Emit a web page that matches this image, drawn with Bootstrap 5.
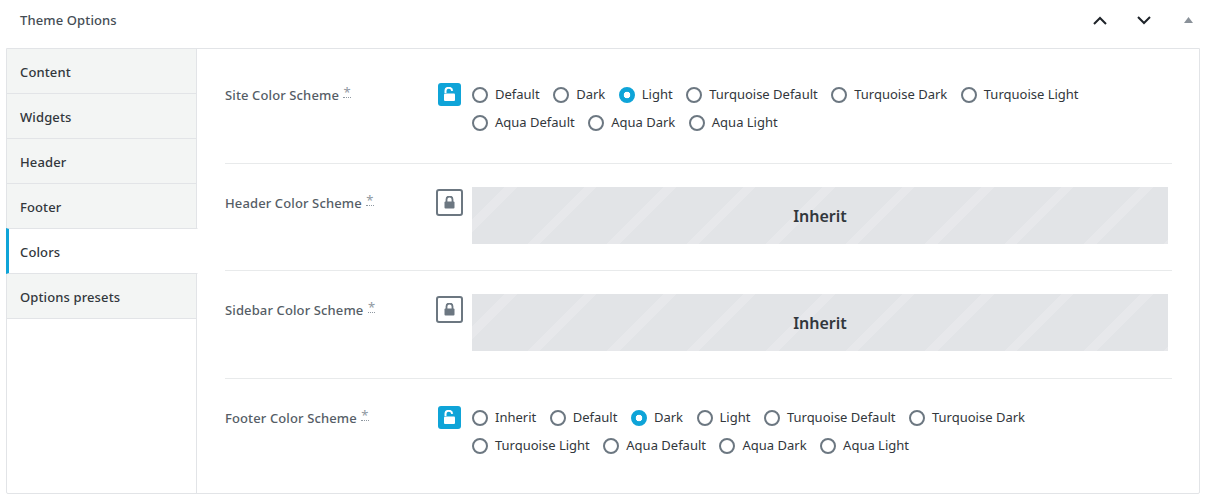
<!DOCTYPE html>
<html lang="en">
<head>
<meta charset="utf-8">
<title>Theme Options</title>
<link href="https://cdn.jsdelivr.net/npm/bootstrap@5.3.0/dist/css/bootstrap.min.css" rel="stylesheet">
<style>
body{font-family:"Noto Sans","Open Sans",sans-serif;font-size:13px;color:#32373c;background:#fff;margin:0;overflow:hidden}
.wrap-box{height:500px}
.top-bar{height:48px;padding-left:20px;padding-bottom:8px}
.top-title{font-size:13px;font-weight:500;letter-spacing:.12px;color:#444c54;line-height:40px}
.arrow-btn{width:44px;height:40px}
.tri-btn{width:44px;height:40px;margin-right:-3px}
.panel-box{margin:0 7px 0 6px;height:446px;border:1px solid #e2e4e7;border-radius:0 0 2px 2px}
.side-tabs{width:190px;flex:none;margin-top:-1px}
.side-tab{line-height:46px;padding-left:13px;background:#f3f5f4;color:#32373c;font-weight:500;letter-spacing:.12px;border-bottom:1px solid #e2e4e7;border-right:1px solid #e2e4e7;border-top:1px solid #e2e4e7;margin-bottom:-1px;box-sizing:content-box;height:44px;font-size:13px}
.side-tab.is-on{background:#fff;border-right-color:#fff;border-left:3px solid #0fa4d8;padding-left:11px;margin-left:-1px;margin-right:-1px;position:relative}
.main-col{flex:1;padding:0 27px 0 28px;margin-left:-1px;border-left:1px solid #e2e4e7}
.opt-row{border-bottom:1px solid #e8eaeb}
.opt-row:last-child{border-bottom:0}
.row-a{height:115px;padding-top:32px}
.row-b{height:107px;padding-top:23px}
.row-c{height:108px;padding-top:23px}
.row-d{padding-top:25px}
.opt-label{width:212px;flex:none;font-weight:500;letter-spacing:.12px;color:#555d66;font-size:13px;line-height:18px;padding-top:5px}
.row-b .opt-label,.row-c .opt-label{padding-top:7px}
.req-mark{font-weight:400;color:#8f98a1;font-size:13px;border-bottom:1px dotted #8f98a1;line-height:1;display:inline-block;margin-left:1px;height:12px;vertical-align:3px}
.lock-col{width:35px;flex:none}
.lock-on{width:23px;height:23px;background:#0fa4d8;border-radius:3px;margin-top:2px;margin-left:1px}
.lock-off{width:27px;height:27px;border:2px solid #6c7781;border-radius:3px;margin-top:2px;margin-left:-1px}
.opts{flex:1;column-gap:13.5px;margin-right:50px;align-content:flex-start}
.opt-item{height:28px;gap:7px;color:#32373c;font-size:13px;margin:0;padding:0}
.opts .opt-radio{width:16px;height:16px;margin:0;border:2px solid #6c7781;background:#fff;box-shadow:none;float:none;flex:none;background-image:none;appearance:none;border-radius:50%}
.opts .opt-radio:checked{background:radial-gradient(circle,#fff 0 3px,#0fa4d8 3.6px);border-color:#0fa4d8}
.inherit-box{flex:1;height:57px;margin-right:4px;font-size:16px;font-weight:600;color:#32373c;background:repeating-linear-gradient(135deg,#e2e4e7 0 23.3px,#e7e8eb 23.3px 32px,#e2e4e7 32px 56.2px)}
</style>
</head>
<body>
<div class="wrap-box">
  <div class="top-bar d-flex align-items-center">
    <div class="top-title flex-grow-1">Theme Options</div>
    <div class="arrow-btn d-flex align-items-center justify-content-center"><svg width="14" height="9" viewBox="0 0 14 9"><path d="M1 8 7 2l6 6" fill="none" stroke="#1e2329" stroke-width="2"/></svg></div>
    <div class="arrow-btn d-flex align-items-center justify-content-center"><svg width="14" height="9" viewBox="0 0 14 9"><path d="M1 1l6 6 6-6" fill="none" stroke="#1e2329" stroke-width="2"/></svg></div>
    <div class="tri-btn d-flex align-items-center justify-content-center"><svg width="9" height="6" viewBox="0 0 9 6"><path d="M4.5 0 9 6H0z" fill="#8a9199"/></svg></div>
  </div>
  <div class="panel-box d-flex">
    <div class="side-tabs">
      <div class="side-tab">Content</div>
      <div class="side-tab">Widgets</div>
      <div class="side-tab">Header</div>
      <div class="side-tab">Footer</div>
      <div class="side-tab is-on">Colors</div>
      <div class="side-tab">Options presets</div>
    </div>
    <div class="main-col">
      <div class="opt-row row-a d-flex">
        <div class="opt-label">Site Color Scheme <span class="req-mark">*</span></div>
        <div class="lock-col"><div class="lock-on d-flex align-items-center justify-content-center"><svg width="13" height="15" viewBox="0 0 13 15"><path d="M2.5 6V3.8C2.5 2 4 .8 5.8.8S9 2 9.2 3.8" fill="none" stroke="#fff" stroke-width="2"/><rect x="1" y="6.5" width="11" height="7.5" rx="1" fill="#fff"/></svg></div></div>
        <div class="opts d-flex flex-wrap">
          <label class="opt-item d-flex align-items-center"><input class="form-check-input opt-radio" type="radio" name="a">Default</label>
          <label class="opt-item d-flex align-items-center"><input class="form-check-input opt-radio" type="radio" name="a">Dark</label>
          <label class="opt-item d-flex align-items-center"><input class="form-check-input opt-radio" type="radio" name="a" checked>Light</label>
          <label class="opt-item d-flex align-items-center"><input class="form-check-input opt-radio" type="radio" name="a">Turquoise Default</label>
          <label class="opt-item d-flex align-items-center"><input class="form-check-input opt-radio" type="radio" name="a">Turquoise Dark</label>
          <label class="opt-item d-flex align-items-center"><input class="form-check-input opt-radio" type="radio" name="a">Turquoise Light</label>
          <label class="opt-item d-flex align-items-center"><input class="form-check-input opt-radio" type="radio" name="a">Aqua Default</label>
          <label class="opt-item d-flex align-items-center"><input class="form-check-input opt-radio" type="radio" name="a">Aqua Dark</label>
          <label class="opt-item d-flex align-items-center"><input class="form-check-input opt-radio" type="radio" name="a">Aqua Light</label>
        </div>
      </div>
      <div class="opt-row row-b d-flex">
        <div class="opt-label">Header Color Scheme <span class="req-mark">*</span></div>
        <div class="lock-col"><div class="lock-off d-flex align-items-center justify-content-center"><svg width="11" height="13" viewBox="0 0 11 13"><path d="M2.5 6V3.5a3 3 0 0 1 6 0V6" fill="none" stroke="#6c7781" stroke-width="1.8"/><rect x=".5" y="5.5" width="10" height="7" rx="1" fill="#6c7781"/></svg></div></div>
        <div class="inherit-box d-flex align-items-center justify-content-center">Inherit</div>
      </div>
      <div class="opt-row row-c d-flex">
        <div class="opt-label">Sidebar Color Scheme <span class="req-mark">*</span></div>
        <div class="lock-col"><div class="lock-off d-flex align-items-center justify-content-center"><svg width="11" height="13" viewBox="0 0 11 13"><path d="M2.5 6V3.5a3 3 0 0 1 6 0V6" fill="none" stroke="#6c7781" stroke-width="1.8"/><rect x=".5" y="5.5" width="10" height="7" rx="1" fill="#6c7781"/></svg></div></div>
        <div class="inherit-box d-flex align-items-center justify-content-center">Inherit</div>
      </div>
      <div class="opt-row row-d d-flex">
        <div class="opt-label">Footer Color Scheme <span class="req-mark">*</span></div>
        <div class="lock-col"><div class="lock-on d-flex align-items-center justify-content-center"><svg width="13" height="15" viewBox="0 0 13 15"><path d="M2.5 6V3.8C2.5 2 4 .8 5.8.8S9 2 9.2 3.8" fill="none" stroke="#fff" stroke-width="2"/><rect x="1" y="6.5" width="11" height="7.5" rx="1" fill="#fff"/></svg></div></div>
        <div class="opts d-flex flex-wrap">
          <label class="opt-item d-flex align-items-center"><input class="form-check-input opt-radio" type="radio" name="d">Inherit</label>
          <label class="opt-item d-flex align-items-center"><input class="form-check-input opt-radio" type="radio" name="d">Default</label>
          <label class="opt-item d-flex align-items-center"><input class="form-check-input opt-radio" type="radio" name="d" checked>Dark</label>
          <label class="opt-item d-flex align-items-center"><input class="form-check-input opt-radio" type="radio" name="d">Light</label>
          <label class="opt-item d-flex align-items-center"><input class="form-check-input opt-radio" type="radio" name="d">Turquoise Default</label>
          <label class="opt-item d-flex align-items-center"><input class="form-check-input opt-radio" type="radio" name="d">Turquoise Dark</label>
          <label class="opt-item d-flex align-items-center"><input class="form-check-input opt-radio" type="radio" name="d">Turquoise Light</label>
          <label class="opt-item d-flex align-items-center"><input class="form-check-input opt-radio" type="radio" name="d">Aqua Default</label>
          <label class="opt-item d-flex align-items-center"><input class="form-check-input opt-radio" type="radio" name="d">Aqua Dark</label>
          <label class="opt-item d-flex align-items-center"><input class="form-check-input opt-radio" type="radio" name="d">Aqua Light</label>
        </div>
      </div>
    </div>
  </div>
</div>
<script src="https://cdn.jsdelivr.net/npm/bootstrap@5.3.0/dist/js/bootstrap.bundle.min.js"></script>
</body>
</html>
